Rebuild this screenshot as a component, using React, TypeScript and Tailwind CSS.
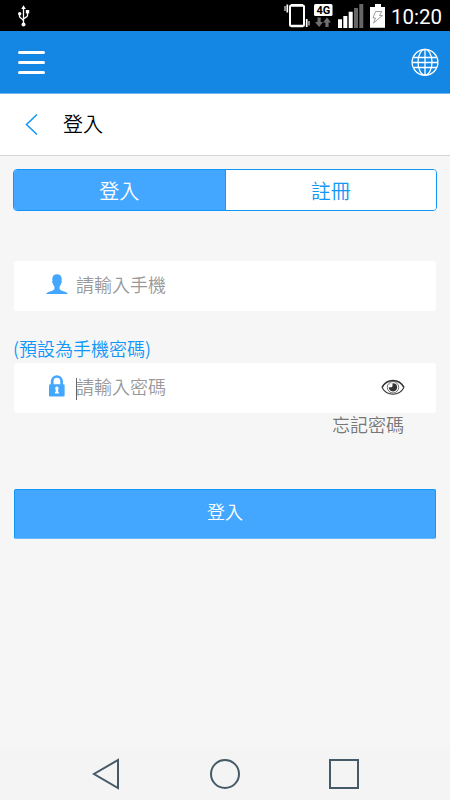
import { ReactNode } from "react";

function UsbIcon() {
  return (
    <svg width="12" height="22" viewBox="0 0 12 22" fill="none" stroke="#fff" strokeWidth="1.3">
      <path d="M5.500 3V19M1.500 9v2.200c0 2 4 2.800 4 5M9.500 7v3.500c0 2-4 2.300-4 4" />
      <path d="M5.500 .3 7.800 4H3.200z" fill="#fff" stroke="none" />
      <circle cx="5.500" cy="19.500" r="2" fill="#fff" stroke="none" />
      <circle cx="1.700" cy="8.800" r="1.700" fill="#fff" stroke="none" />
      <path d="M7.800 5h3.400v3.400H7.800z" fill="#fff" stroke="none" />
    </svg>
  );
}

function VibrateIcon() {
  return (
    <svg width="26" height="24" viewBox="0 0 26 24" fill="none" stroke="#fff">
      <rect x="6" y="1.500" width="14" height="20.500" rx="1" strokeWidth="2" />
      <path d="M7 1.300h12M7 22h12" strokeWidth="2.400" />
      <path d="M3.300 .5v8M22.700 15v8" strokeWidth="1.700" />
      <path d="M1 2v5M25 17v4.500" strokeWidth="1.300" stroke="#ccc" />
    </svg>
  );
}

function NetworkIcon() {
  return (
    <svg width="19" height="24" viewBox="0 0 19 24">
      <rect x="0" y="0" width="18.500" height="12" rx="1.500" fill="#fff" />
      <text x="9.300" y="10" textAnchor="middle" fontSize="11" fontWeight="700" fontFamily="Roboto, sans-serif" fill="#000">4G</text>
      <path d="M3.500 13.500h3.200v4.500h2.300L5.100 23 1 18h2.500zM11.400 23h3.200v-4.500h2.400l-4-5-4 5h2.400z" fill="#707070" />
    </svg>
  );
}

function SignalIcon() {
  return (
    <svg width="26" height="24" viewBox="0 0 26 24">
      <path d="M0 15.300h4V24H0zM5.300 12h4v12h-4zM10.700 7.700h4V24h-4z" fill="#fff" />
      <path d="M16 4h4v20h-4zM21.300 0h4v24h-4z" fill="#666" />
    </svg>
  );
}

function BatteryIcon() {
  return (
    <svg width="16" height="24" viewBox="0 0 16 24">
      <path d="M5 0h6v3h4v20.700H0V3h5z" fill="#fff" />
      <path d="M5.500 7.500h6.300L9.500 11.500h3L3.500 19l2-5H3z" fill="#fff" stroke="#888" strokeWidth=".8" />
    </svg>
  );
}

function GlobeIcon() {
  return (
    <svg width="28" height="28" viewBox="0 0 28 28" fill="none" stroke="#fff" strokeWidth="1.300">
      <circle cx="14" cy="14.300" r="12.900" />
      <ellipse cx="14" cy="14.300" rx="7" ry="12.900" />
      <path d="M14 1.500v26M1 14.500h26M2.600 9.500h22.800M2.600 19.500h22.800" />
    </svg>
  );
}

function UserIcon() {
  return (
    <svg width="22" height="21" viewBox="0 0 22 21" fill="#44a7ff">
      <path d="M11 .2c3 0 4.700 1.900 4.700 4.900 0 .7-.1 1.300-.2 1.800.6.400.4 2-.4 2.500-.3 1.300-.8 2.300-1.500 3v2.500c.4 1.300 2.400 1.800 4.500 2.500 1.800.5 3.300 1.100 3.900 2.600H0c.6-1.500 2.100-2.100 3.900-2.600 2.100-.7 4.100-1.200 4.500-2.500v-2.500c-.7-.7-1.200-1.700-1.500-3-.8-.5-1-2.100-.4-2.500-.1-.5-.2-1.100-.2-1.800C6.300 2.100 8 .2 11 .2z" />
    </svg>
  );
}

function LockIcon() {
  return (
    <svg width="16" height="22" viewBox="0 0 16 22">
      <path d="M3.200 11V6.300a4.700 4.800 0 0 1 9.400 0V11" fill="none" stroke="#44a7ff" strokeWidth="2.700" />
      <rect x="0" y="9.200" width="15.600" height="12.300" rx="1.200" fill="#44a7ff" />
      <path d="M7.800 11.500a1.800 1.800 0 0 1 1.400 2.900v2.600h.6v1.400H6v-1.400h.6v-2.600a1.800 1.800 0 0 1 1.200-2.900z" fill="#fff" />
    </svg>
  );
}

function EyeIcon() {
  return (
    <svg width="24" height="17" viewBox="0 0 24 17" fill="none" stroke="#333">
      <path d="M1 8.500C6-.8 18-.8 23 8.500" strokeWidth="1.600" />
      <path d="M1 8.500c5 9 17 9 22 0" strokeWidth="1.100" />
      <circle cx="12" cy="8.300" r="5.700" strokeWidth=".7" />
      <circle cx="12" cy="8.300" r="4.100" fill="#333" stroke="none" />
      <path d="M11.500 4v3.200l-1 1H7.800A4.200 4.200 0 0 1 11.500 4z" fill="#fff" stroke="none" />
    </svg>
  );
}

interface FieldProps {
  icon: ReactNode;
  placeholder: string;
  focused?: boolean;
  trailing?: ReactNode;
}

function Field({ icon, placeholder, focused, trailing }: FieldProps) {
  return (
    <div className="flex h-[50px] items-center rounded-[3px] bg-white pl-8 pr-[31px]">
      <div className="flex w-[22px] justify-center pb-1">{icon}</div>
      <div className="ml-2 flex flex-1 items-center pb-[5px] text-[18px] leading-[26px] text-[#999]">
        {focused && <span className="-mr-px h-[22px] w-px translate-y-[3px] bg-[#666]" />}
        <span>{placeholder}</span>
      </div>
      {trailing && <div className="pb-0.5">{trailing}</div>}
    </div>
  );
}

export default function App() {
  return (
    <div className="flex h-[800px] w-[450px] flex-col overflow-hidden bg-[#f6f6f6] font-['Noto_Sans_CJK_TC',sans-serif] font-[350]">
      <div className="flex h-[31px] shrink-0 bg-black">
        <div className="pl-[18px] pt-[5px]">
          <UsbIcon />
        </div>
        <div className="ml-auto flex items-start pr-[8px] pt-[4px]">
          <VibrateIcon />
          <div className="ml-1"><NetworkIcon /></div>
          <div className="ml-[5px]"><SignalIcon /></div>
          <div className="ml-1.5"><BatteryIcon /></div>
          <span className="ml-[5px] font-[Roboto,sans-serif] text-[20.5px] font-normal leading-[26px] text-white">10:20</span>
        </div>
      </div>

      <header className="flex h-[63px] shrink-0 items-center justify-between border-b border-[#6fb4f5] bg-[#1487e4] pl-[18px] pr-[11px]">
        <div className="flex w-[27px] flex-col gap-[7px]">
          <span className="h-[3px] rounded-full bg-white" />
          <span className="h-[3px] rounded-full bg-white" />
          <span className="h-[3px] rounded-full bg-white" />
        </div>
        <GlobeIcon />
      </header>

      <div className="flex h-[62px] shrink-0 items-center border-b border-[#d4d4d4] bg-white pl-[25px]">
        <svg width="13" height="22" viewBox="0 0 13 22" fill="none" stroke="#1296f5" strokeWidth="1.500">
          <path d="M12 .5 1.500 10.500 12 20.500" />
        </svg>
        <h1 className="ml-[25px] pb-0.5 text-[20px] leading-7 text-black">登入</h1>
      </div>

      <main className="flex flex-1 flex-col px-3.5">
        <div className="-mx-px mt-[13px] flex h-[42px] overflow-hidden rounded-[4px] border border-[#1296f8] text-[20px]">
          <button className="flex-1 border-r border-[#1296f8] bg-[#44a7ff] pt-px text-white">登入</button>
          <button className="flex-1 bg-white pt-px text-[#1296f8]">註冊</button>
        </div>

        <div className="mt-[50px]">
          <Field icon={<UserIcon />} placeholder="請輸入手機" />
        </div>

        <p className="-ml-px mt-[23px] h-[29px] text-[18px] leading-[28px] text-[#1296f8]">(預設為手機密碼)</p>
        <Field icon={<LockIcon />} placeholder="請輸入密碼" focused trailing={<EyeIcon />} />
        <a className="self-end pr-8 text-[18px] leading-[22px] text-[#777]">忘記密碼</a>

        <button className="mt-[54px] h-[50px] rounded-[2px] border border-[#1296f8] border-b-[#6cb8fc] bg-[#44a7ff] pb-1.5 text-[18px] text-white">
          登入
        </button>
      </main>

      <nav className="flex h-[52px] shrink-0 items-center justify-between bg-[#f4f4f4] pl-[92px] pr-[90px]">
        <svg width="28" height="32" viewBox="0 0 28 32" fill="none" stroke="#455a66" strokeWidth="2">
          <path d="M26 2v28L2 16z" />
        </svg>
        <svg width="32" height="32" viewBox="0 0 32 32" fill="none" stroke="#455a66" strokeWidth="2">
          <circle cx="17" cy="16" r="14" />
        </svg>
        <svg width="32" height="32" viewBox="0 0 32 32" fill="none" stroke="#455a66" strokeWidth="2">
          <path d="M2 2h28v28H2z" />
        </svg>
      </nav>
    </div>
  );
}
